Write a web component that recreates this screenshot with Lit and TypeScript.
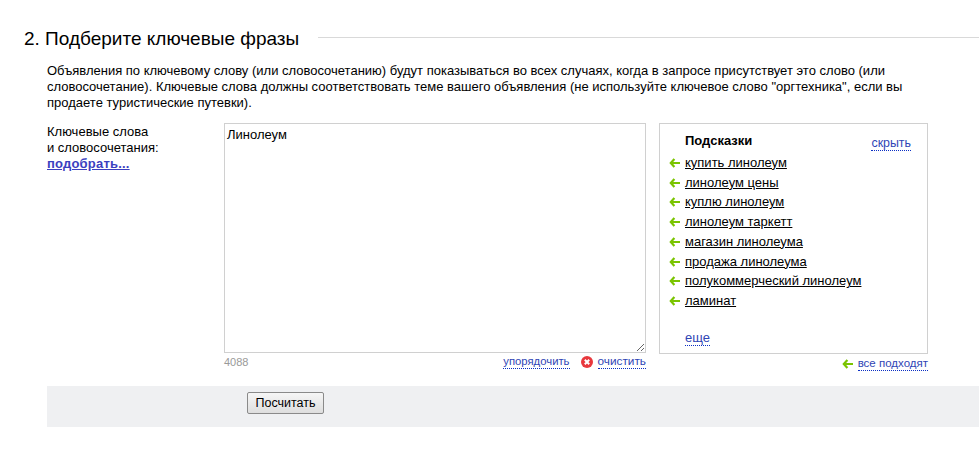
import { LitElement, html, css } from "lit";
import { customElement } from "lit/decorators.js";

const HINTS = [
  "купить линолеум",
  "линолеум цены",
  "куплю линолеум",
  "линолеум таркетт",
  "магазин линолеума",
  "продажа линолеума",
  "полукоммерческий линолеум",
  "ламинат",
];

const arrow = html`<svg class="arrow" width="11" height="10" viewBox="0 0 11 10"><path d="M5.4 1 L1.8 5 L5.4 9 M2.2 5 H11" fill="none" stroke="#7ac400" stroke-width="2.2"/></svg>`;

@customElement("app-root")
export class AppRoot extends LitElement {
  static styles = css`
    :host { display: block; width: 979px; height: 452px; overflow: hidden; background: #fff; font-family: "Liberation Sans", Arial, sans-serif; font-size: 13px; line-height: 16px; color: #000; }
    .page { padding: 29px 0 0 24px; display: flex; flex-direction: column; }
    .head { display: flex; align-items: center; height: 20px; }
    h2 { margin: 0; font-weight: 400; font-size: 19px; line-height: 20px; white-space: nowrap; }
    .rule { flex: 1; height: 1px; background: #d9d9d9; margin: 0 0 3px 19px; }
    .body { padding-left: 23px; }
    .intro { margin: 14px 0 0; width: 880px; height: 48px; }
    .form { display: flex; margin-top: 12px; }
    .label { width: 177px; padding-top: 1px; }
    .pick { color: #3b3fbf; font-weight: 700; text-decoration: underline; letter-spacing: 0.2px; }
    .mid { width: 422px; margin-right: 13px; }
    textarea { display: block; box-sizing: border-box; width: 422px; height: 230px; border: 1px solid #d0d0d0; padding: 3px 2px; margin: 0; font: inherit; line-height: 16px; resize: both; outline: none; }
    .under { display: flex; align-items: center; height: 18px; margin-top: 0; }
    .count { color: #999; font-size: 11px; flex: 1; }
    .dot { color: #2f45b5; border-bottom: 1px dotted #0b2fc4; font-size: 11.3px; line-height: 13px; }
    .clear { font-size: 11.8px; }
    .x { margin: 0 5px 0 11px; display: block; }
    .right { width: 269px; }
    .panel { box-sizing: border-box; height: 231px; border: 1px solid #d0d0d0; padding: 9px 16px 0 9px; position: relative; }
    .ptitle { display: flex; justify-content: space-between; padding-left: 16px; font-weight: 700; height: 20px; }
    .ptitle .dot { font-weight: 400; font-size: 12.4px; margin-top: 4px; align-self: flex-start; }
    .hint { display: flex; align-items: center; height: 19.75px; }
    .arrow { display: block; margin-right: 5px; flex: none; }
    .hint a { color: #000; text-decoration: underline; }
    .more { padding: 19px 0 0 16px; }
    .more .dot { font-size: 13px; }
    .all { display: flex; justify-content: flex-end; align-items: center; height: 19px; }
    .all .dot { font-size: 11.5px; }
    .band { background: #eff0f2; height: 41px; margin-top: 13px; padding: 6px 0 0 200px; box-sizing: border-box; }
    button { box-sizing: border-box; width: 77px; height: 22px; padding: 0; font: inherit; font-size: 12.5px; background: linear-gradient(#f6f6f6, #dedede); border: 1px solid #8a8a8a; border-radius: 2px; color: #000; display: block; }
  `;

  render() {
    return html`<div class="page">
      <div class="head"><h2>2. Подберите ключевые фразы</h2><div class="rule"></div></div>
      <div class="body">
        <p class="intro">Объявления по ключевому слову (или словосочетанию) будут показываться во всех случаях, когда в запросе присутствует это слово (или словосочетание). Ключевые слова должны соответствовать теме вашего объявления (не используйте ключевое слово "оргтехника", если вы продаете туристические путевки).</p>
        <div class="form">
          <div class="label">Ключевые слова<br />и словосочетания:<br /><a class="pick">подобрать...</a></div>
          <div class="mid">
            <textarea .value=${"Линолеум"}></textarea>
            <div class="under">
              <span class="count">4088</span>
              <a class="dot">упорядочить</a>
              <svg class="x" width="12" height="12" viewBox="0 0 12 12"><circle cx="6" cy="6" r="6" fill="#e8383d"/><path d="M3.8 3.8 L8.2 8.2 M8.2 3.8 L3.8 8.2" stroke="#fff" stroke-width="2"/></svg>
              <a class="dot clear">очистить</a>
            </div>
          </div>
          <div class="right">
            <div class="panel">
              <div class="ptitle"><span>Подсказки</span><a class="dot">скрыть</a></div>
              ${HINTS.map((h) => html`<div class="hint">${arrow}<a>${h}</a></div>`)}
              <div class="more"><a class="dot">еще</a></div>
            </div>
            <div class="all">${arrow}<a class="dot">все подходят</a></div>
          </div>
        </div>
        <div class="band"><button>Посчитать</button></div>
      </div>
    </div>`;
  }
}
